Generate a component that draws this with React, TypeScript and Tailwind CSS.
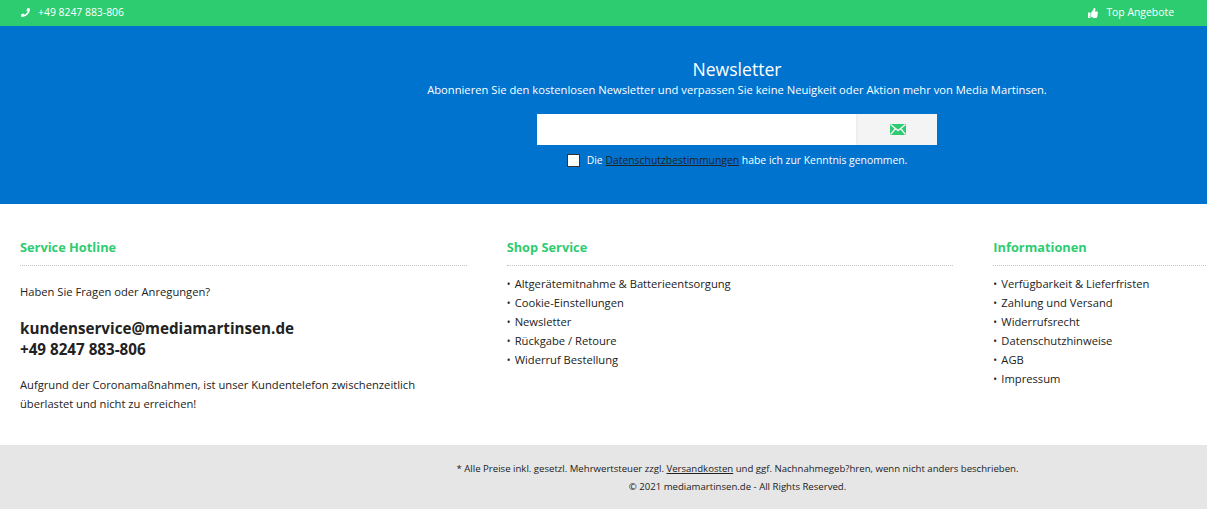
import { FaPhone, FaThumbsUp } from "react-icons/fa";

const SHOP_LINKS = [
  "Altgerätemitnahme & Batterieentsorgung",
  "Cookie-Einstellungen",
  "Newsletter",
  "Rückgabe / Retoure",
  "Widerruf Bestellung",
];

const INFO_LINKS = [
  "Verfügbarkeit & Lieferfristen",
  "Zahlung und Versand",
  "Widerrufsrecht",
  "Datenschutzhinweise",
  "AGB",
  "Impressum",
];

function ColumnTitle({ children }: { children: string }) {
  return (
    <h3 className="h-[31px] border-b border-dotted border-[#c4c4c4] text-[12.8px] leading-[24px] font-bold text-[#2ecc71]">
      {children}
    </h3>
  );
}

function LinkList({ items }: { items: string[] }) {
  return (
    <ul className="mt-[9px]">
      {items.map((item) => (
        <li key={item} className="flex h-[19px] items-center text-[11.2px] text-[#222222]">
          <span className="w-[8px] text-[10px]">•</span>
          <span>{item}</span>
        </li>
      ))}
    </ul>
  );
}

export default function App() {
  return (
    <div className="h-[509px] w-[1207px] overflow-hidden bg-white font-['Open_Sans',sans-serif]">
      <div className="flex h-[26px] items-center justify-between bg-[#2ecc71] pr-[33px] pl-[21px] text-[10.4px] font-medium text-white">
        <div className="flex items-center gap-[8px]">
          <FaPhone className="h-[9px] w-[9px]" />
          <span>+49 8247 883-806</span>
        </div>
        <div className="flex items-center gap-[8px]">
          <FaThumbsUp className="h-[10px] w-[10px]" />
          <span>Top Angebote</span>
        </div>
      </div>

      <div className="h-[178px] bg-[#0073cf] pt-[30px] pl-[267px] text-center text-white">
        <h2 className="text-[17.6px] leading-[27px]">Newsletter</h2>
        <p className="-mt-[1px] text-[11.2px] leading-[16px]">
          Abonnieren Sie den kostenlosen Newsletter und verpassen Sie keine Neuigkeit oder Aktion mehr von Media Martinsen.
        </p>
        <div className="mx-auto mt-[16px] flex h-[31px] w-[400px]">
          <input className="h-full w-[321px] border-r-2 border-[#eeeeee] bg-white" type="text" />
          <button className="flex h-full w-[79px] items-center justify-center bg-[#f4f4f4]">
            <svg viewBox="0 0 16 11" className="h-[11px] w-[16px]">
              <rect width="16" height="11" fill="#2ecc71" />
              <path d="M0.5 0.5 L8 6.5 L15.5 0.5 M0.5 10.5 L5.5 4.5 M15.5 10.5 L10.5 4.5" fill="none" stroke="#f4f4f4" strokeWidth="1.4" />
            </svg>
          </button>
        </div>
        <div className="mt-[8px] flex items-center justify-center text-[10.4px]">
          <span className="mr-[7px] h-[13px] w-[13px] border border-[#333333] bg-white" />
          <span>
            Die <a className="text-[#222222] underline">Datenschutzbestimmungen</a> habe ich zur Kenntnis genommen.
          </span>
        </div>
      </div>

      <div className="grid h-[241px] w-[1460px] grid-cols-3 gap-x-[40px] px-[20px] pt-[31px]">
        <div>
          <ColumnTitle>Service Hotline</ColumnTitle>
          <p className="mt-[16px] text-[11.2px] leading-[19px] text-[#222222]">Haben Sie Fragen oder Anregungen?</p>
          <p className="mt-[17px] text-[15.2px] leading-[21px] font-bold text-[#222222]">
            kundenservice@mediamartinsen.de
            <br />
            +49 8247 883-806
          </p>
          <p className="mt-[15px] w-[420px] text-[11.2px] leading-[19px] text-[#222222]">
            Aufgrund der Coronamaßnahmen, ist unser Kundentelefon zwischenzeitlich überlastet und nicht zu erreichen!
          </p>
        </div>
        <div>
          <ColumnTitle>Shop Service</ColumnTitle>
          <LinkList items={SHOP_LINKS} />
        </div>
        <div>
          <ColumnTitle>Informationen</ColumnTitle>
          <LinkList items={INFO_LINKS} />
        </div>
      </div>

      <div className="h-[64px] bg-[#e6e6e6] pt-[15px] pl-[268px] text-center text-[9.6px] leading-[18px] text-[#222222]">
        <p>
          * Alle Preise inkl. gesetzl. Mehrwertsteuer zzgl. <a className="underline">Versandkosten</a> und ggf. Nachnahmegeb?hren, wenn nicht anders beschrieben.
        </p>
        <p>© 2021 mediamartinsen.de - All Rights Reserved.</p>
      </div>
    </div>
  );
}
